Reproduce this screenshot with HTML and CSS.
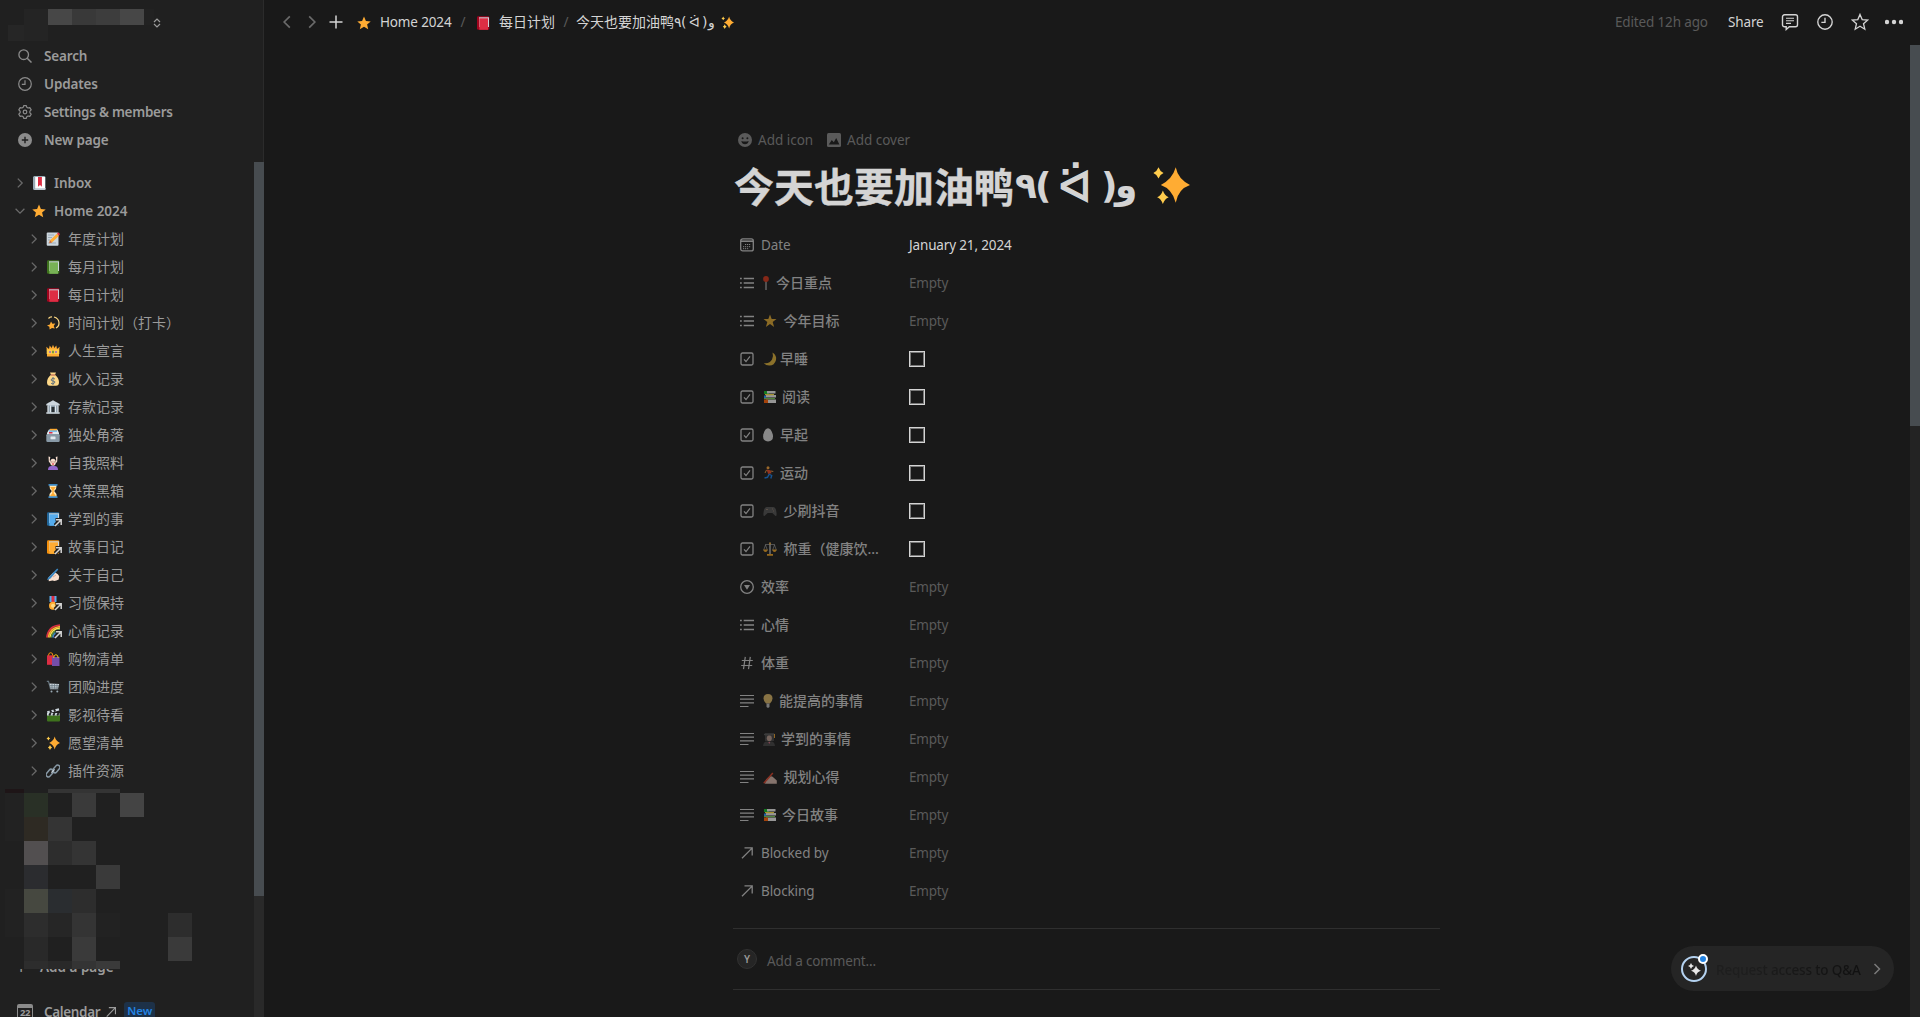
FILE: index.html
```html
<!DOCTYPE html>
<html lang="zh-CN">
<head>
<meta charset="utf-8">
<title>今天也要加油鸭</title>
<link rel="stylesheet" href="styles.css">
</head>
<body>
<svg class="sprite" aria-hidden="true">
  <symbol id="chev" viewBox="0 0 14 14"><path d="M4.800 2.600 9.200 7l-4.400 4.400" fill="none" stroke="currentColor" stroke-width="1.300"/></symbol>
  <symbol id="search" viewBox="0 0 14 14"><circle cx="5.700" cy="5.700" r="4.800" fill="none" stroke="currentColor" stroke-width="1.300"/><path d="m9.200 9.200 4.300 4.300" stroke="currentColor" stroke-width="1.500"/></symbol>
  <symbol id="clock" viewBox="0 0 14 14"><circle cx="7" cy="7" r="6.300" fill="none" stroke="currentColor" stroke-width="1.200"/><path d="M7 3.300V7.300H3.800" fill="none" stroke="currentColor" stroke-width="1.200"/></symbol>
  <symbol id="gear" viewBox="0 0 14 14"><path d="m5.700.6h2.600l.5 1.700 1.200.7 1.800-.4 1.400 2.300-1.300 1.300v1.600l1.300 1.300-1.400 2.300-1.800-.4-1.200.7-.5 1.700H5.700l-.5-1.700-1.200-.7-1.800.4-1.400-2.300 1.300-1.300V6.200L.8 4.900l1.400-2.300L4 3l1.200-.7z" fill="none" stroke="currentColor" stroke-width="1.200" stroke-linejoin="round"/><circle cx="7" cy="7" r="1.800" fill="none" stroke="currentColor" stroke-width="1.200"/></symbol>
  <symbol id="addc" viewBox="0 0 14 14"><circle cx="7" cy="7" r="7" fill="currentColor"/><path d="M7 3.800v6.400M3.800 7h6.400" stroke="#202020" stroke-width="1.400"/></symbol>
  <symbol id="arrow" viewBox="0 0 14 14"><path d="M2 12.300 11.600 2.600M4.500 1.900h7.700v7.700" fill="none" stroke="currentColor" stroke-width="1.300"/></symbol>
  <symbol id="list" viewBox="0 0 14 14"><path d="M0 2.500h1.800M3.700 2.500H14M0 7h1.800M3.700 7H14M0 11.500h1.800M3.700 11.500H14" stroke="currentColor" stroke-width="1.300"/></symbol>
  <symbol id="lines" viewBox="0 0 14 14"><path d="M0 1.500h14M0 5.200h14M0 8.900h14M0 12.500h8.500" stroke="currentColor" stroke-width="1.200"/></symbol>
  <symbol id="check" viewBox="0 0 14 14"><rect x="1" y="1" width="12" height="12" rx="1.500" fill="none" stroke="currentColor" stroke-width="1.300"/><path d="m4 7.300 2 2.200 4-5.200" fill="none" stroke="currentColor" stroke-width="1.200"/></symbol>
  <symbol id="date" viewBox="0 0 14 14"><rect x=".7" y=".9" width="12.600" height="12" rx="2" fill="none" stroke="currentColor" stroke-width="1.300"/><path d="M1 3.200h12" stroke="currentColor" stroke-width="1.600"/><path d="M5 6.500h6M3 8.700h8M3 10.700h6" stroke="currentColor" stroke-width="1" stroke-dasharray="1.200 .8"/></symbol>
  <symbol id="select" viewBox="0 0 14 14"><circle cx="7" cy="7" r="6.300" fill="none" stroke="currentColor" stroke-width="1.300"/><path d="M4 5h6L7 9.800z" fill="currentColor"/></symbol>
  <symbol id="hash" viewBox="0 0 14 14"><path d="M5.300.8 3.500 13.200M10.300.8 8.500 13.200M1.800 4.500h11M1.200 9.500h11" stroke="currentColor" stroke-width="1.200"/></symbol>
  <symbol id="smile" viewBox="0 0 14 14"><circle cx="7" cy="7" r="7" fill="currentColor"/><circle cx="4.600" cy="5.200" r="1" fill="#191919"/><circle cx="9.400" cy="5.200" r="1" fill="#191919"/><path d="M3.300 8q3.700 1.200 7.400 0-.8 3.300-3.700 3.300T3.300 8" fill="#191919"/></symbol>
  <symbol id="image" viewBox="0 0 14 14"><rect width="14" height="14" rx="1.500" fill="currentColor"/><path d="m1.800 11.500 3-4.500 2 2.300L9.200 5l3.200 6.500z" fill="#191919"/></symbol>
  <symbol id="comment" viewBox="0 0 18 18"><path d="M3.500 1.800h11a2 2 0 0 1 2 2v8a2 2 0 0 1-2 2H8.300L5.200 16.500v-2.700H3.500a2 2 0 0 1-2-2v-8a2 2 0 0 1 2-2z" fill="none" stroke="currentColor" stroke-width="1.400"/><path d="M5 5.200h8M5 7.800h8M5 10.400h5" stroke="currentColor" stroke-width="1.100"/></symbol>
  <symbol id="star-o" viewBox="0 0 18 18"><path d="m9 1.400 2.200 5.200 5.600.4-4.300 3.700 1.300 5.500L9 13.300l-4.800 2.900 1.300-5.500L1.200 7l5.600-.4z" fill="none" stroke="currentColor" stroke-width="1.300"/></symbol>
  <symbol id="e-star" viewBox="0 0 14 14"><path d="m7 .6 1.900 4.300 4.800.5-3.600 3.100 1.100 4.800L7 10.800l-4.200 2.500 1.100-4.800L.3 5.400l4.800-.5z" fill="#ffac33"/></symbol>
  <symbol id="e-inbox" viewBox="0 0 14 14"><rect x="1" width="12.500" height="14" rx="1.500" fill="#99aab5"/><rect x="3" y="1" width="10" height="12" fill="#fff"/><path d="M2.500 12h11v1.700h-11z" fill="#ccd6dd"/><path d="M1 1h2.200v12H1z" fill="#99aab5"/><path d="M6 1h3.900v9.700L8 9l-2 1.700z" fill="#dd2e44"/></symbol>
  <symbol id="e-memo" viewBox="0 0 14 14"><rect x=".7" y=".5" width="11.800" height="13.300" rx="1" fill="#ccd6dd"/><path d="M2 3h6M2 5.500h4M2 8h2M2 11h8" stroke="#8899a6" stroke-width=".7"/><path d="M3.200 11.200 4 8.300l7-6.600 2 2-7 6.800z" fill="#ffac33"/><path d="m11 1.700 1-1.200q1.800 0 1.700 2l-.8 1.200z" fill="#dd2e44"/><path d="m3.200 11.200.8-2.900 2 2.100z" fill="#c1694f"/></symbol>
  <symbol id="e-green" viewBox="0 0 14 14"><rect x="1" y=".3" width="12.300" height="13.500" rx="1.300" fill="#3e721d"/><path d="M3 1.300h10V11H3z" fill="#ccd6dd"/><path d="M3.300 2.300H12v11.500H3.300z" fill="#77b255"/></symbol>
  <symbol id="e-red" viewBox="0 0 14 14"><rect x="1" y=".3" width="12.300" height="13.500" rx="1.300" fill="#a0041e"/><path d="M3 1.300h10V11H3z" fill="#ccd6dd"/><path d="M3.300 2.300H12v11.500H3.300z" fill="#dd2e44"/></symbol>
  <symbol id="e-blue" viewBox="0 0 14 14"><rect x="1" y=".3" width="12.300" height="13.500" rx="1.300" fill="#226699"/><path d="M3 1.300h10V11H3z" fill="#ccd6dd"/><path d="M3.300 2.300H12v11.500H3.300z" fill="#55acee"/></symbol>
  <symbol id="e-orange" viewBox="0 0 14 14"><rect x="1" y=".3" width="12.300" height="13.500" rx="1.300" fill="#f4900c"/><path d="M3 1.300h10V11H3z" fill="#ccd6dd"/><path d="M3.300 2.300H12v11.500H3.300z" fill="#ffac33"/></symbol>
  <symbol id="e-dizzy" viewBox="0 0 14 14"><path d="m5 5.500 1.400 2.300 2.900-.2-1.600 2.300 1 2.700-2.700-.7-2.400 1.700-.2-2.900L1 9.500l2.800-1z" fill="#ffac33"/><path d="M2.500 2.500Q4 .7 6 1M8 1q4.500 1.200 5 5.500.2 4-3 5.500" fill="none" stroke="#ffd983" stroke-width="1.200"/></symbol>
  <symbol id="e-crown" viewBox="0 0 14 14"><path d="M1 7 .3 2.800 3 5l.7-3.500L5.700 4 7 .8 8.300 4l2-2.500L11 5l2.700-2.200L13 7v5.500H1z" fill="#ffac33"/><path d="M.7 5.500h12.600V10H.7z" fill="#ffcc4d"/><path d="M3 7.300h2v1.500H3zM9 7.300h2v1.500H9z" fill="#9266cc"/><path d="M6.200 6.700h1.600v2.600H6.200z" fill="#5c913b"/></symbol>
  <symbol id="e-money" viewBox="0 0 14 14"><path d="M5 2.800 4 .5h6L9 2.800q4 3.200 4 7.500 0 3.500-3 3.500H4q-3 0-3-3.500 0-4.300 4-7.500z" fill="#fdd888"/><path d="M4.700 3h4.600" stroke="#bf6952" stroke-width="1.200"/><path d="M9 7Q7 5.500 5.500 7t1.500 2 1.500 2-3.500.3M7 5v8" fill="none" stroke="#67757f"/></symbol>
  <symbol id="e-bank" viewBox="0 0 14 14"><path d="M2 2.800h10v10H2z" fill="#8899a6"/><path d="M7 .2 13.700 4v1.500H.3V4z" fill="#ccd6dd"/><path d="M2 5.500v7M4.500 5.500v7M9.500 5.500v7M12 5.500v7" stroke="#e1e8ed" stroke-width="1.200"/><path d="M5.500 7h3v6h-3z" fill="#292f33"/><path d="M.3 13h13.400" stroke="#ccd6dd" stroke-width="1.600"/></symbol>
  <symbol id="e-card" viewBox="0 0 14 14"><path d="M1 5 3 1.500h8.500L13 5v4H1z" fill="#e1e8ed"/><path d="M4 .8h7v2H4z" fill="#ffac33"/><path d="M3 2.500h8v1.200H3z" fill="#55acee"/><path d="M3 4h3.500v1.500H3z" fill="#dd2e44"/><rect x=".3" y="6" width="13.400" height="8" rx="1.200" fill="#8899a6"/><rect x="4.500" y="8.500" width="5" height="2.800" rx=".5" fill="#e1e8ed"/></symbol>
  <symbol id="e-care" viewBox="0 0 14 14"><path d="M3 2q4-3.500 8 0v8H3z" fill="#17191b"/><path d="m2.500.5 1.800.5-.5 3 .8 4-1.800-2.500zM11.500.5 9.700 1l.5 3-.8 4 1.800-2.500z" fill="#f7dece"/><ellipse cx="7" cy="6.200" rx="2.800" ry="3.500" fill="#f7dece"/><path d="M2 14q0-4 3.500-4h3q3.500 0 3.500 4z" fill="#9266cc"/><path d="M6 8h2" stroke="#df1f32" stroke-width="1"/><path d="M5.500 6h.8M7.700 6h.8" stroke="#662113"/></symbol>
  <symbol id="e-glass" viewBox="0 0 14 14"><path d="M3.300 1h7.400q0 4-2.500 6 2.500 2 2.500 6H3.300q0-4 2.500-6-2.500-2-2.500-6z" fill="#ffe8b6"/><path d="M4.200 3h5.600L7.700 6.300v3l2.500 3H3.800l2.500-3v-3z" fill="#ffac33"/><path d="M2.500 0h9v1.700h-9zM2.500 12.300h9V14h-9z" fill="#3b88c3"/></symbol>
  <symbol id="e-write" viewBox="0 0 14 14"><path d="M2.500 9.500 7 4.700q3.500-.8 6.200 3.500l-.5 3.300Q9 13.800 6.500 12.500l-3.700.8z" fill="#f7dece"/><path d="m1 12.300 1-2.500L11.200.4 12.300 1.500 4.500 10.500z" fill="#3b88c3"/><path d="m7 9 3-2" stroke="#e0aa94"/></symbol>
  <symbol id="e-medal" viewBox="0 0 14 14"><path d="M3.500 0h7v6h-7z" fill="#55acee"/><path d="M5.500 0h3v6.500h-3z" fill="#dd2e44"/><circle cx="7" cy="9.800" r="4" fill="#ffac33"/><circle cx="7" cy="9.800" r="2" fill="#ffd983"/></symbol>
  <symbol id="e-rainbow" viewBox="0 0 14 14"><g fill="none" stroke-width="1.500"><path d="M.8 13.500Q2 2 14 1" stroke="#dd2e44"/><path d="M2.300 13.500Q3.500 3.500 14 2.500" stroke="#ffac33"/><path d="M3.800 13.500Q5 5 14 4" stroke="#ffe14d"/><path d="M5.300 13.500Q6.500 6.500 14 5.500" stroke="#5c913b"/><path d="M6.800 13.500Q8 8 14 7" stroke="#3b88c3"/><path d="M8.300 13.500Q9.500 9.500 14 8.500" stroke="#9266cc"/></g></symbol>
  <symbol id="e-bags" viewBox="0 0 14 14"><path d="M1 3.300h7v9.500H1z" fill="#dd2e44"/><path d="M6 5h7.500v9H6z" fill="#744eaa"/><path d="M2.500 3.500Q2.500.7 4.700.7T6.800 3.500" fill="none" stroke="#f4900c"/><path d="M7.700 6q0-3.300 2.200-3.300T12.200 6" fill="none" stroke="#f4c90c"/></symbol>
  <symbol id="e-cart" viewBox="0 0 14 14"><path d="M.8 1.300h1.700L4.500 9h8" fill="none" stroke="#66757f" stroke-width="1.200"/><path d="m3.500 3.500 9.700.5-1.200 4.500-7.300.3z" fill="#ccd6dd"/><path d="M4 5.500h9M4.500 7.200h8M6 3.800v5M8.500 3.800v5M11 3.800v5" stroke="#66757f" stroke-width=".7"/><circle cx="5.500" cy="11.500" r="1" fill="#99aab5"/><circle cx="11.300" cy="11.500" r="1" fill="#99aab5"/></symbol>
  <symbol id="e-clap" viewBox="0 0 14 14"><path d="M1 7h13v5.500q0 1-1 1H2q-1 0-1-1z" fill="#3e721d"/><path d="M1 5h12.500v2.500H1zM1 3.300 12.800.2l.5 2.300L1.500 5.500z" fill="#ccd6dd"/><path d="m4 2 1.300 2.500M8 1l1.200 2.500M4.500 5 3.300 7.500M8.500 5 7.300 7.500M12.500 5l-1.200 2.500" stroke="#202020" stroke-width="1.800"/></symbol>
  <symbol id="e-spark" viewBox="0 0 28 28"><path d="M17.500 1q1.700 8.800 10.500 13-8.800 3-10.500 13Q15 17 6.500 14 15 9.800 17.500 1z" fill="#ffac33"/><path d="M4.800 1q1 3 3.700 4.200-2.700 1.100-3.700 4Q3.700 6.300 1 5.200 3.700 4 4.800 1zM8 18q1.300 3.700 4.300 5Q9.300 24.200 8 28q-1.200-3.800-4.200-5Q6.800 21.700 8 18z" fill="#ffcc4d"/></symbol>
  <symbol id="e-link" viewBox="0 0 14 14"><g fill="none" stroke="#8899a6" stroke-width="1.500"><rect x="-.6" y="6.900" width="8.600" height="4.400" rx="2.200" transform="rotate(-50 3.700 9.100)"/><rect x="6" y="2.700" width="8.600" height="4.400" rx="2.200" transform="rotate(-50 10.300 4.900)"/></g><path d="m5.400 8.600 3.200-3.200" stroke="#ccd6dd" stroke-width="1.300"/></symbol>
  <symbol id="badge" viewBox="0 0 9 9"><path d="M1 7.500 5.500 3M1.500 1.500h6v6" fill="none" stroke="#202020" stroke-width="4"/><path d="M1 8 6.500 2.500M2 1.800h5.200V7" fill="none" stroke="#d5d5d5" stroke-width="1.500"/></symbol>
  <symbol id="p-pin" viewBox="0 0 14 14"><path d="M3 5v9" stroke="#888" stroke-width="1"/><circle cx="3" cy="3" r="2.900" fill="#862818"/></symbol>
  <symbol id="p-star" viewBox="0 0 14 14"><path d="m7 .6 1.700 4.500h4.800L9.700 8l1.400 4.900L7 10l-4.100 2.900L4.300 8 .5 5.100h4.800z" fill="#8b6b25"/></symbol>
  <symbol id="p-moon" viewBox="0 0 14 14"><path d="M9.500.5q4.500 3 3.500 7.500-1.500 5.500-6.500 5.500Q2.800 13.600.8 11q6 .8 8.200-3.500 1.700-3.500.5-7z" fill="#8b712a"/></symbol>
  <symbol id="p-books" viewBox="0 0 14 14"><path d="M1 1h5v3H1z" fill="#157a21"/><path d="M4 1h8.500v2.500H4zM3 5h10v2.500H3zM3 9.500h10V13H4z" fill="#969696"/><path d="M2 4h9v1.200H2z" fill="#a3922b"/><path d="M1 5.500h2v3H1z" fill="#1f65a0"/><path d="M1 8h11v1.200H1z" fill="#51833c"/><path d="M1 9.500h4V13H1z" fill="#a5430b"/></symbol>
  <symbol id="p-egg" viewBox="0 0 14 14"><path d="M5 .3q3 0 4.800 6.200Q11 13 5 13.500-.8 13 .3 6.500 2 .3 5 .3z" fill="#888"/></symbol>
  <symbol id="p-run" viewBox="0 0 14 14"><circle cx="5" cy="1.800" r="1.500" fill="#99682a"/><path d="m3.500 3.500 4 .8 1 3-3.300.7z" fill="#93341f"/><path d="M3.500 4 2 7M7.800 5l2.500.5" stroke="#93622f" stroke-width="1"/><path d="m5.800 8 2.900 1.500-.9 3M6 8.500 4.500 11.300l-3 .7" fill="none" stroke="#165391" stroke-width="1.400"/></symbol>
  <symbol id="p-game" viewBox="0 0 14 14"><path d="M3.500 3h7q2.300 0 3 5.500.5 4-1 3.500L9.300 9H4.700L1.500 12Q0 12.500.5 8.500 1.200 3 3.500 3z" fill="#393939"/><path d="M3 5.500h2M9 5h1M10 7h1" stroke="#5b5048"/></symbol>
  <symbol id="p-scale" viewBox="0 0 14 14"><path d="M7 .5v11.500" stroke="#888" stroke-width="1.200"/><path d="M2 2.500h10M2.500 3l-2 5.500M2.500 3l2 5.500M11.500 3l-2 5.500M11.500 3l2 5.500" stroke="#777" stroke-width=".6"/><path d="M.3 7.500h4.400q-.5 2.500-2.200 2.500T.3 7.500zM9.300 7.500h4.400q-.5 2.500-2.200 2.500t-2.200-2.500zM4 12h6v1.700H4z" fill="#96691d"/><circle cx="7" cy="1.600" r="1" fill="#96691d"/></symbol>
  <symbol id="p-bulb" viewBox="0 0 14 14"><path d="M5 0q4.500.2 4.500 4.500Q9.500 7 7 9.500H3Q.5 7 .5 4.500.5.2 5 0z" fill="#887344"/><path d="M3.500 9.500h3V13l-1.500 1-1.500-1z" fill="#777"/></symbol>
  <symbol id="p-grad" viewBox="0 0 14 14"><path d="M2 1h9v8H2zM0 14q.5-4.500 3.500-4.500h5q3 0 3.500 4.500z" fill="#303030"/><ellipse cx="6.300" cy="6.300" rx="2.500" ry="3" fill="#74635c"/><path d="M1 2.500h11" stroke="#3b3b3b" stroke-width="1.500"/><path d="M11.500 2v4" stroke="#926621"/><path d="m5.300 10 1 2 1-2z" fill="#845"/></symbol>
  <symbol id="p-write" viewBox="0 0 14 14"><path d="M3 9.500 6 6.800q2.500-1.500 4.500.8l3.300 3v3.200H2z" fill="#85736c"/><path d="M.8 13.300 9.800 3" stroke="#8a3022" stroke-width="1.500"/></symbol>
</svg>

<div class="app">
  <aside class="sidebar">
    <header class="workspace">
      <div class="blur-row first"><i></i><i class="g4"></i><i class="g2"></i><i class="g3"></i><i class="g4"></i><i class="edge"></i></div>
      <div class="blur-row second"><i></i><i></i></div>
      <svg class="updown" viewBox="0 0 8 10"><path d="m1 4 3-3 3 3M1 6l3 3 3-3" fill="none" stroke="currentColor" stroke-width="1.200"/></svg>
    </header>
    <nav class="menu">
      <a><svg><use href="#search"/></svg><span>Search</span></a>
      <a><svg><use href="#clock"/></svg><span>Updates</span></a>
      <a><svg><use href="#gear"/></svg><span class="settings">Settings &amp; members</span></a>
      <a><svg><use href="#addc"/></svg><span>New page</span></a>
    </nav>
    <div class="scroller">
      <div class="scroll-body">
        <nav class="tree">
          <a class="root"><svg class="chev"><use href="#chev"/></svg><svg class="emo"><use href="#e-inbox"/></svg><span>Inbox</span></a>
          <a class="root open"><svg class="chev"><use href="#chev"/></svg><svg class="emo"><use href="#e-star"/></svg><span>Home 2024</span></a>
          <a><svg class="chev"><use href="#chev"/></svg><svg class="emo"><use href="#e-memo"/></svg><span>年度计划</span></a>
          <a><svg class="chev"><use href="#chev"/></svg><svg class="emo"><use href="#e-green"/></svg><span>每月计划</span></a>
          <a><svg class="chev"><use href="#chev"/></svg><svg class="emo"><use href="#e-red"/></svg><span>每日计划</span></a>
          <a><svg class="chev"><use href="#chev"/></svg><svg class="emo"><use href="#e-dizzy"/></svg><span>时间计划（打卡）</span></a>
          <a><svg class="chev"><use href="#chev"/></svg><svg class="emo"><use href="#e-crown"/></svg><span>人生宣言</span></a>
          <a><svg class="chev"><use href="#chev"/></svg><svg class="emo"><use href="#e-money"/></svg><span>收入记录</span></a>
          <a><svg class="chev"><use href="#chev"/></svg><svg class="emo"><use href="#e-bank"/></svg><span>存款记录</span></a>
          <a><svg class="chev"><use href="#chev"/></svg><svg class="emo"><use href="#e-card"/></svg><span>独处角落</span></a>
          <a><svg class="chev"><use href="#chev"/></svg><svg class="emo"><use href="#e-care"/></svg><span>自我照料</span></a>
          <a><svg class="chev"><use href="#chev"/></svg><svg class="emo"><use href="#e-glass"/></svg><span>决策黑箱</span></a>
          <a><svg class="chev"><use href="#chev"/></svg><svg class="emo"><use href="#e-blue"/></svg><svg class="badge"><use href="#badge"/></svg><span>学到的事</span></a>
          <a><svg class="chev"><use href="#chev"/></svg><svg class="emo"><use href="#e-orange"/></svg><svg class="badge"><use href="#badge"/></svg><span>故事日记</span></a>
          <a><svg class="chev"><use href="#chev"/></svg><svg class="emo"><use href="#e-write"/></svg><span>关于自己</span></a>
          <a><svg class="chev"><use href="#chev"/></svg><svg class="emo"><use href="#e-medal"/></svg><svg class="badge"><use href="#badge"/></svg><span>习惯保持</span></a>
          <a><svg class="chev"><use href="#chev"/></svg><svg class="emo"><use href="#e-rainbow"/></svg><svg class="badge"><use href="#badge"/></svg><span>心情记录</span></a>
          <a><svg class="chev"><use href="#chev"/></svg><svg class="emo"><use href="#e-bags"/></svg><span>购物清单</span></a>
          <a><svg class="chev"><use href="#chev"/></svg><svg class="emo"><use href="#e-cart"/></svg><span>团购进度</span></a>
          <a><svg class="chev"><use href="#chev"/></svg><svg class="emo"><use href="#e-clap"/></svg><span>影视待看</span></a>
          <a><svg class="chev"><use href="#chev"/></svg><svg class="emo"><use href="#e-spark"/></svg><span>愿望清单</span></a>
          <a><svg class="chev"><use href="#chev"/></svg><svg class="emo"><use href="#e-link"/></svg><span>插件资源</span></a>
        </nav>
        <div class="mosaic">
          <i class="m-wine"></i><i></i><i class="m3"></i><i class="m3"></i><i class="m3"></i><i></i><i></i><i></i>
          <i class="m1"></i><i class="m-green"></i><i></i><i class="m4"></i><i></i><i class="m5"></i><i></i><i></i>
          <i class="m1"></i><i class="m-brown"></i><i class="m3"></i><i></i><i></i><i></i><i></i><i></i>
          <i></i><i class="m-mauve"></i><i class="m2"></i><i class="m3"></i><i></i><i></i><i></i><i></i>
          <i></i><i class="m-slate"></i><i></i><i></i><i class="m4"></i><i></i><i></i><i></i>
          <i class="m1"></i><i class="m-olive"></i><i class="m-steel"></i><i class="m2"></i><i></i><i></i><i></i><i></i>
          <i class="m1"></i><i class="m2"></i><i class="mid"></i><i class="m3"></i><i class="m1"></i><i></i><i></i><i class="m2"></i>
          <i></i><i class="mid2"></i><i></i><i class="m4"></i><i></i><i></i><i></i><i class="m4"></i>
          <i></i><i class="m2"></i><i class="mid2"></i><i class="m3"></i><i class="m4"></i><i></i><i></i><i></i>
        </div>
        <a class="add-page"><b>+</b><span>Add a page</span></a>
        <a class="calendar"><em>22</em><span>Calendar</span><svg><use href="#arrow"/></svg><strong>New</strong></a>
      </div>
      <div class="side-bar"><div class="side-thumb"></div></div>
    </div>
  </aside>

  <main>
    <header class="topbar">
      <svg class="nav back"><use href="#chev"/></svg>
      <svg class="nav fwd"><use href="#chev"/></svg>
      <svg class="plus" viewBox="0 0 14 14"><path d="M7 .5v13M.5 7h13" stroke="currentColor" stroke-width="1.500"/></svg>
      <svg class="emo c-star"><use href="#e-star"/></svg><span class="home">Home 2024</span>
      <span class="slash">/</span>
      <svg class="emo c-book"><use href="#e-red"/></svg><span class="daily">每日计划</span>
      <span class="slash s2">/</span>
      <span class="crumb">今天也要加油鸭<bdo dir="ltr" class="kao"><i>٩</i><i>(</i><i>ᐛ</i><i>)</i><i>و</i></bdo></span>
      <svg class="emo c-spark"><use href="#e-spark"/></svg>
      <div class="actions">
        <span class="edited">Edited 12h ago</span>
        <span class="share">Share</span>
        <svg><use href="#comment"/></svg>
        <svg class="small"><use href="#clock"/></svg>
        <svg><use href="#star-o"/></svg>
        <svg viewBox="0 0 18 18" fill="currentColor"><circle cx="2" cy="9" r="2.200"/><circle cx="9" cy="9" r="2.200"/><circle cx="16" cy="9" r="2.200"/></svg>
      </div>
    </header>
    <div class="content">
      <article class="page">
        <div class="adders"><svg><use href="#smile"/></svg><span class="ai">Add icon</span><svg><use href="#image"/></svg><span class="ac">Add cover</span></div>
        <h1><span>今天也要加油鸭</span><bdo dir="ltr" class="kao"><i>٩</i><i>(</i><i class="face">ᐛ</i><i>)</i><i>و</i></bdo><svg><use href="#e-spark"/></svg></h1>
        <div class="props">
          <div class="row"><svg><use href="#date"/></svg><span class="name">Date</span><span class="val set">January 21, 2024</span></div>
          <div class="row"><svg><use href="#list"/></svg><span class="name"><svg class="w15"><use href="#p-pin"/></svg>今日重点</span><span class="val">Empty</span></div>
          <div class="row"><svg><use href="#list"/></svg><span class="name"><svg class="w23"><use href="#p-star"/></svg>今年目标</span><span class="val">Empty</span></div>
          <div class="row"><svg><use href="#check"/></svg><span class="name"><svg class="w19"><use href="#p-moon"/></svg>早睡</span><span class="box"></span></div>
          <div class="row"><svg><use href="#check"/></svg><span class="name"><svg class="w21"><use href="#p-books"/></svg>阅读</span><span class="box"></span></div>
          <div class="row"><svg><use href="#check"/></svg><span class="name"><svg class="w19"><use href="#p-egg"/></svg>早起</span><span class="box"></span></div>
          <div class="row"><svg><use href="#check"/></svg><span class="name"><svg class="w19"><use href="#p-run"/></svg>运动</span><span class="box"></span></div>
          <div class="row"><svg><use href="#check"/></svg><span class="name"><svg class="w23"><use href="#p-game"/></svg>少刷抖音</span><span class="box"></span></div>
          <div class="row"><svg><use href="#check"/></svg><span class="name"><svg class="w23"><use href="#p-scale"/></svg>称重（健康饮<span class="dots">...</span></span><span class="box"></span></div>
          <div class="row"><svg><use href="#select"/></svg><span class="name">效率</span><span class="val">Empty</span></div>
          <div class="row"><svg><use href="#list"/></svg><span class="name">心情</span><span class="val">Empty</span></div>
          <div class="row"><svg><use href="#hash"/></svg><span class="name">体重</span><span class="val">Empty</span></div>
          <div class="row"><svg><use href="#lines"/></svg><span class="name"><svg class="w18"><use href="#p-bulb"/></svg>能提高的事情</span><span class="val">Empty</span></div>
          <div class="row"><svg><use href="#lines"/></svg><span class="name"><svg class="w20"><use href="#p-grad"/></svg>学到的事情</span><span class="val">Empty</span></div>
          <div class="row"><svg><use href="#lines"/></svg><span class="name"><svg class="w23"><use href="#p-write"/></svg>规划心得</span><span class="val">Empty</span></div>
          <div class="row"><svg><use href="#lines"/></svg><span class="name"><svg class="w21"><use href="#p-books"/></svg>今日故事</span><span class="val">Empty</span></div>
          <div class="row"><svg><use href="#arrow"/></svg><span class="name">Blocked by</span><span class="val">Empty</span></div>
          <div class="row"><svg><use href="#arrow"/></svg><span class="name">Blocking</span><span class="val">Empty</span></div>
        </div>
        <div class="comment"><span class="avatar">Y</span><span class="ph">Add a comment...</span></div>
      </article>
      <div class="main-bar"><div class="main-thumb"></div></div>
    </div>
    <div class="qa">
      <svg class="ai-icon" viewBox="0 0 28 28"><circle cx="13" cy="15" r="12" fill="none" stroke="#b4d2f0" stroke-width="2"/><path d="M15 11.500q1 4 5 5.200-4 1-5 5.300-1-4.300-5-5.300 4-1.200 5-5.200zM10 9q.6 2.300 3 3-2.400.7-3 3-.6-2.300-3-3 2.400-.7 3-3z" fill="#e8e8e8"/><circle cx="22" cy="5" r="4" fill="#2383e2" stroke="#fff" stroke-width="2"/></svg>
      <span>Request access to Q&amp;A</span>
      <svg class="go"><use href="#chev"/></svg>
    </div>
  </main>
</div>
</body>
</html>
```
FILE: styles.css
```css
* { box-sizing: border-box; }
body {
  margin: 0;
  width: 1920px;
  height: 1017px;
  overflow: hidden;
  background: #191919;
  color: #d4d4d4;
  font: 13.5px/20px "Noto Sans", "Noto Sans CJK SC", sans-serif;
  white-space: nowrap;
}
.sprite { position: absolute; width: 0; height: 0; }
svg { display: block; flex: none; width: 14px; height: 14px; }
i { font-style: normal; }
.app { display: flex; height: 1017px; }

/* Sidebar */
.sidebar {
  width: 264px;
  flex: none;
  display: flex;
  flex-direction: column;
  background: #202020;
  border-right: 1px solid #2b2b2b;
  color: #9b9b9b;
}
.workspace { height: 42px; padding-top: 9px; position: relative; }
.blur-row { display: flex; height: 16px; }
.blur-row i { width: 24px; background: #242424; }
.blur-row.first { padding-left: 24px; }
.blur-row.second { padding-left: 8px; }
.blur-row.second i:first-child { width: 16px; background: #262626; }
.blur-row .g2 { background: #393939; }
.blur-row .g3 { background: #3d3d3d; }
.blur-row .g4 { background: #474747; }
.blur-row .edge { width: 10px; background: #222; }
.updown { position: absolute; left: 153px; top: 18px; width: 8px; height: 10px; }

.menu a { display: flex; align-items: center; height: 28px; padding-left: 18px; gap: 12px; font-weight: 600; letter-spacing: -.15px; }
.menu .settings { letter-spacing: -.27px; }
.menu svg { color: #8b8b8b; }

.scroller { flex: 1; min-height: 0; display: flex; margin-top: 8px; }
.scroll-body { flex: 1; overflow: hidden; padding-top: 7px; }
.side-bar { width: 10px; background: #292929; margin-right: -1px; z-index: 1; }
.side-thumb { height: 734px; background: #474c50; }
.tree a { display: flex; align-items: center; height: 28px; padding-left: 27px; position: relative; font-size: 14px; }
.tree a.root { padding-left: 13px; font-weight: 600; font-size: 13.5px; letter-spacing: -.05px; }
.tree .chev { color: #6a6a6a; margin-right: 5px; }
.tree .open .chev { transform: rotate(90deg); }
.tree span { margin-left: 8px; }
.tree a:not(.root) span { margin-top: -1px; }
.badge { position: absolute; left: 54px; top: 13px; width: 9px; height: 9px; }

.mosaic {
  display: grid;
  grid-template-columns: 19px repeat(7, 24px);
  grid-template-rows: 4px repeat(7, 24px) 8px;
  margin: 4px 0 0 5px;
  width: 187px;
  position: relative;
  z-index: 1;
}
.mosaic i { background: #202020; }
.mosaic .m1 { background: #222; }
.mosaic .mid { background: #262626; }
.mosaic .mid2 { background: #292929; }
.mosaic .m2 { background: #2d2d2d; }
.mosaic .m3 { background: #343434; }
.mosaic .m4 { background: #3a3a3a; }
.mosaic .m5 { background: #444; }
.mosaic .m-wine { background: #1e1517; }
.mosaic .m-green { background: #293026; }
.mosaic .m-brown { background: #2e2a23; }
.mosaic .m-mauve { background: #524f50; }
.mosaic .m-slate { background: #2b2c2f; }
.mosaic .m-olive { background: #464840; }
.mosaic .m-steel { background: #2a2d30; }
.add-page { display: flex; align-items: center; height: 28px; margin-top: -16px; padding-left: 16px; font-weight: 600; }
.add-page b { width: 24px; font-weight: 400; font-size: 18px; }
.calendar { display: flex; align-items: center; height: 28px; margin-top: 17px; padding-left: 17px; font-weight: 600; letter-spacing: -.35px; }
.calendar em {
  width: 16px;
  height: 17px;
  margin: 0 11px 0 0;
  border: 1.500px solid #8b8b8b;
  border-top-width: 4px;
  border-radius: 2px;
  font: 700 9.500px/9px "Noto Sans", sans-serif;
  text-align: center;
}
.calendar svg { width: 12px; height: 12px; margin: 0 7px 0 5px; }
.calendar strong { width: 31px; height: 20px; border-radius: 3px; background: #1d3148; color: #2383e2; font: 600 11.5px/18px "Noto Sans", sans-serif; letter-spacing: 0; text-align: center; }

/* Main column */
main { flex: 1; min-width: 0; display: flex; flex-direction: column; }
.topbar { display: flex; align-items: center; height: 45px; padding: 0 17px 1px 14px; }
.nav { width: 18px; height: 18px; color: #6a6a6a; }
.nav.back { transform: rotate(180deg); }
.nav.fwd { margin: 0 6px 0 7px; }
.plus { margin-left: 2px; }
.c-star { margin: 2px 9px 0 14px; }
.home { width: 72px; letter-spacing: -.15px; }
.slash { width: 10px; margin-left: 6px; text-align: center; color: #5a5a5a; }
.c-book { margin: 1px 9px 0 8px; }
.daily { width: 56px; font-size: 14px; }
.slash.s2 { margin-right: 5px; }
.crumb { display: flex; font-size: 14px; }
.kao { display: flex; font-family: "DejaVu Sans", sans-serif; }
.crumb .kao i:nth-child(1) { width: 7px; }
.crumb .kao i:nth-child(2) { width: 8px; }
.crumb .kao i:nth-child(3) { width: 13px; }
.crumb .kao i:nth-child(4) { width: 6px; }
.crumb .kao i:nth-child(5) { width: 9px; }
.c-spark { margin-left: 4px; width: 13px; height: 13px; }
.actions { display: flex; align-items: center; margin-left: auto; }
.actions svg { width: 18px; height: 18px; margin-left: 17px; }
.actions svg.small { width: 16px; height: 16px; margin: 0 1px 0 18px; }
.actions svg:last-child { margin-left: 16px; }
.edited { width: 113px; color: #5a5a5a; letter-spacing: -.15px; }
.share { width: 36px; letter-spacing: -.15px; }

.content { flex: 1; min-height: 0; display: flex; justify-content: space-between; }
.page { margin-left: 469px; width: 707px; padding-top: 84px; }
.main-bar { width: 10px; background: #232323; }
.main-thumb { height: 381px; background: #474c50; }
.adders { display: flex; align-items: center; height: 22px; padding-left: 5px; color: #5a5a5a; }
.adders .ai { width: 69px; margin-left: 6px; }
.adders .ac { margin-left: 6px; }
h1 { display: flex; align-items: center; height: 60px; margin: 4px 0 3px; padding-left: 1px; font: 700 40px/60px "Noto Sans CJK SC", sans-serif; }
h1 > span { width: 281px; -webkit-text-stroke: .4px; }
h1 .kao { align-items: baseline; line-height: 60px; font-weight: 700; font-size: 36px; }
h1 .kao i:nth-child(1) { width: 20px; }
h1 .kao i:nth-child(2) { width: 24px; }
h1 .kao i:nth-child(4) { width: 14px; }
h1 .kao i:nth-child(5) { width: 22px; }
h1 .kao .face { width: 42px; font-size: 42px; font-weight: 400; -webkit-text-stroke: 1.500px; transform: translateY(4px); }
h1 svg { width: 38px; height: 38px; margin-left: 15px; }
.props { padding: 8px 0 18px 7px; border-bottom: 1px solid #2f2f2f; }
.row { display: flex; align-items: center; height: 38px; color: #828282; }
.name { display: flex; align-items: center; width: 148px; margin-left: 7px; font-size: 14px; font-weight: 500; }
.name svg { margin-left: 2px; }
.row:first-child .name, .row:nth-last-child(-n+2) .name { font-size: 13.5px; letter-spacing: -.1px; font-weight: 400; }
.w15 { margin-right: -1px; }
.w18 { margin-right: 2px; }
.w19 { margin-right: 3px; }
.w20 { margin-right: 4px; }
.w21 { margin-right: 5px; }
.w23 { margin-right: 6.5px; }
.val { color: #5a5a5a; letter-spacing: -.2px; }
.val.set { color: #d4d4d4; letter-spacing: -.15px; }
.box { width: 16px; height: 16px; border: 1px solid #d4d4d4; box-shadow: inset 0 0 0 1px #777; }
.comment { display: flex; align-items: center; height: 61px; padding-left: 4px; border-bottom: 1px solid #2f2f2f; color: #5a5a5a; }
.avatar { width: 20px; height: 20px; border: 1px solid #313131; border-radius: 50%; background: #252525; color: #999; font: 600 10px/18px "Noto Sans", sans-serif; text-align: center; }
.ph { margin: 3px 0 0 10px; letter-spacing: -.15px; }

/* Floating prompt over the page */
.qa {
  position: absolute;
  left: 1671px;
  top: 946px;
  width: 223px;
  height: 45px;
  display: flex;
  align-items: center;
  padding-left: 10px;
  border-radius: 23px;
  background: #252525;
}
.ai-icon { width: 28px; height: 28px; margin-top: -2px; }
.qa span { width: 147px; margin: 3px 6px 0 7px; background: linear-gradient(90deg, #1e1e1e 20%, #101010); -webkit-background-clip: text; background-clip: text; color: transparent; font-weight: 500; letter-spacing: -.15px; }
.go { width: 16px; height: 16px; color: #7a7a7a; }
```
